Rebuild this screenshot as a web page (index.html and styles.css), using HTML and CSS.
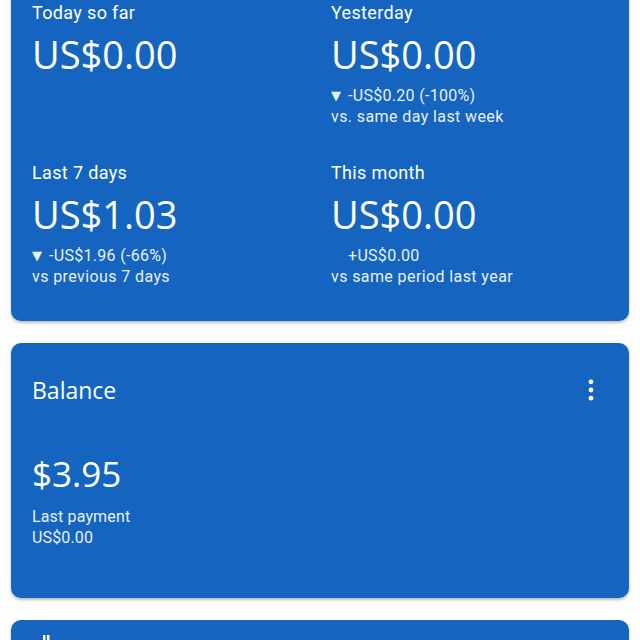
FILE: index.html
```html
<!DOCTYPE html>
<html lang="en">
<head>
<meta charset="utf-8">
<title>Earnings</title>
<link rel="stylesheet" href="styles.css">
</head>
<body>
<main class="page">
  <section class="card stats">
    <div class="grid">
      <div class="cell">
        <div class="label">Today so far</div>
        <div class="value">US$0.00</div>
      </div>
      <div class="cell">
        <div class="label">Yesterday</div>
        <div class="value">US$0.00</div>
        <div class="delta"><span class="arrow">▼</span>-US$0.20 (-100%)</div>
        <div class="compare">vs. same day last week</div>
      </div>
      <div class="cell">
        <div class="label">Last 7 days</div>
        <div class="value">US$1.03</div>
        <div class="delta"><span class="arrow">▼</span>-US$1.96 (-66%)</div>
        <div class="compare">vs previous 7 days</div>
      </div>
      <div class="cell">
        <div class="label">This month</div>
        <div class="value">US$0.00</div>
        <div class="delta"><span class="arrow"></span>+US$0.00</div>
        <div class="compare">vs same period last year</div>
      </div>
    </div>
  </section>

  <section class="card balance">
    <div class="balance-head">
      <h2 class="title">Balance</h2>
      <button class="menu" aria-label="More options">
        <svg width="24" height="24" viewBox="0 0 24 24"><circle cx="12" cy="3.8" r="2.4" fill="#fff"/><circle cx="12" cy="12" r="2.4" fill="#fff"/><circle cx="12" cy="20.2" r="2.4" fill="#fff"/></svg>
      </button>
    </div>
    <div class="amount">$3.95</div>
    <div class="sub">Last payment</div>
    <div class="sub">US$0.00</div>
  </section>

  <section class="card next">
    <svg class="next-icon" width="20" height="20" viewBox="0 0 20 20"><rect x="2" y="1" width="2.5" height="16" fill="#fff"/><rect x="6" y="1" width="2.5" height="16" fill="#fff"/></svg>
  </section>
</main>
</body>
</html>
```
FILE: styles.css
```css
html, body {
  margin: 0;
  padding: 0;
  background: #fdfdfd;
  overflow: hidden;
}
body {
  font-family: Roboto, "Liberation Sans", sans-serif;
  color: #fff;
}
.page {
  display: flex;
  flex-direction: column;
  gap: 22px;
  padding: 0 11px;
  margin-top: -18px;
}
.card {
  background: #1565c0;
  border-radius: 10px;
  box-shadow: 0 2px 3px rgba(0, 0, 0, 0.25);
}
.stats {
  padding: 19px 21px 34px;
}
.grid {
  display: grid;
  grid-template-columns: 1fr 1fr;
  column-gap: 22px;
  row-gap: 34px;
}
.label {
  font-size: 18px;
  line-height: 24px;
  letter-spacing: 0.35px;
}
.value {
  font-family: "Open Sans", Roboto, sans-serif;
  font-size: 38px;
  line-height: 44px;
  margin-top: 6.5px;
}
.delta {
  font-size: 16px;
  line-height: 20px;
  letter-spacing: 0.3px;
  margin-top: 10.7px;
  color: rgba(255, 255, 255, 0.93);
}
.arrow {
  display: inline-block;
  width: 17px;
  font-family: "DejaVu Sans", sans-serif;
  font-size: 13px;
  vertical-align: 1px;
}
.compare {
  font-size: 16px;
  line-height: 20px;
  letter-spacing: 0.4px;
  margin-top: 1px;
  color: rgba(255, 255, 255, 0.93);
}
.balance {
  padding: 33px 21px 50px;
}
.balance-head {
  display: flex;
  align-items: center;
  justify-content: space-between;
}
.title {
  margin: 0;
  font-family: "Open Sans", Roboto, sans-serif;
  font-weight: 400;
  font-size: 23px;
  line-height: 28px;
}
.menu {
  background: none;
  border: 0;
  padding: 0;
  margin-right: 5px;
  width: 24px;
  height: 24px;
}
.amount {
  font-family: "Open Sans", Roboto, sans-serif;
  font-size: 35px;
  line-height: 40px;
  margin-top: 50px;
}
.sub {
  font-size: 16px;
  line-height: 21px;
  letter-spacing: 0.15px;
  color: rgba(255, 255, 255, 0.93);
}
.amount + .sub {
  margin-top: 12px;
}
.next {
  height: 60px;
  padding: 14px 30px;
}
.next-icon {
  display: block;
}
```
